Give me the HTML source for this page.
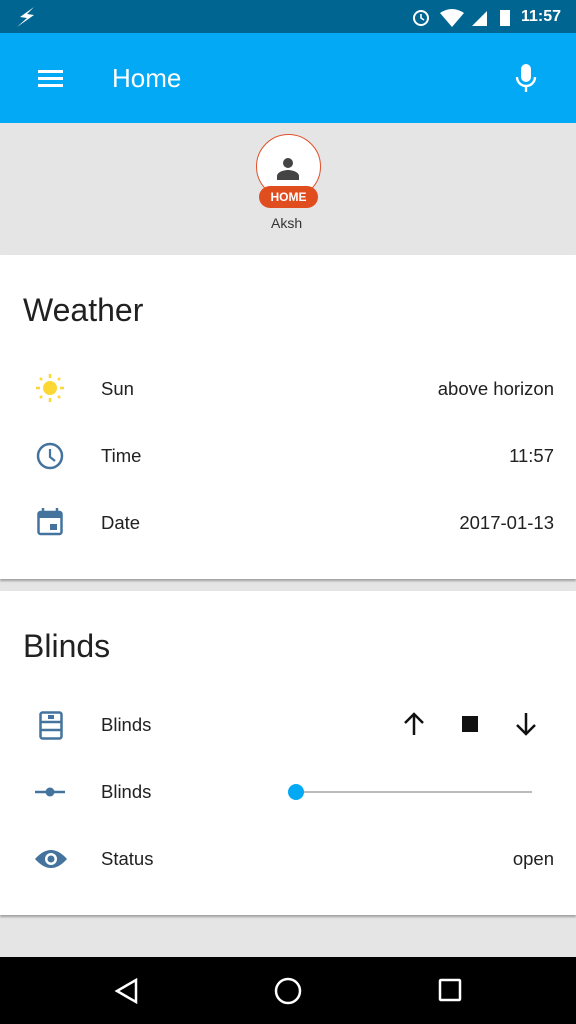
<!DOCTYPE html>
<html><head><style>
*{margin:0;padding:0;box-sizing:border-box}
body{width:576px;height:1024px;background:#e5e5e5;font-family:"Liberation Sans",sans-serif;position:relative;overflow:hidden;color:#212121}
.abs{position:absolute}
.card{position:absolute;left:0;width:576px;background:#fff;box-shadow:0 2px 2px rgba(0,0,0,.3)}
.t{position:absolute;font-size:18.5px}
.h{position:absolute;left:23px;font-size:32px}
svg.i{position:absolute}
</style></head><body>
<div class="abs" style="top:0;left:0;width:576px;height:33px;background:#006591"></div>
<svg class="abs" style="left:14px;top:6px" width="24" height="22"><path d="M20 1L6 11l7 1L3 21l17-12-7-1z" fill="#fff"/></svg>
<svg class="abs" style="left:410px;top:6px" width="120" height="22">
<circle cx="11" cy="12" r="7" fill="none" stroke="#fff" stroke-width="2"/><path d="M11 8v4l3 2" stroke="#fff" stroke-width="1.6" fill="none"/>
<path d="M30 7q12-8 24 0l-12 14z" fill="#fff"/><path d="M62 20l15-15v15z" fill="#fff"/>
<rect x="90" y="4" width="10" height="16" fill="#fff"/></svg>
<div class="abs" style="top:8px;left:521px;color:#fff;font-size:16px;font-weight:bold">11:57</div>
<div class="abs" style="top:33px;left:0;width:576px;height:90px;background:#03a9f4"></div>
<div class="abs" style="left:38px;top:70px;width:25px;height:3px;background:#fff;box-shadow:0 7px #fff,0 14px #fff"></div>
<div class="abs" style="left:112px;top:63px;color:#fff;font-size:26px">Home</div>
<svg class="abs" style="left:515px;top:64px" width="22" height="28"><rect x="6" y="0" width="10" height="18" rx="5" fill="#fff"/><path d="M2 13a9 9 0 0 0 18 0M11 22v6" stroke="#fff" stroke-width="2.4" fill="none"/></svg>
<div class="abs" style="left:256px;top:134px;width:65px;height:65px;border-radius:50%;background:#fff;border:1.5px solid #e0502a"></div>
<svg class="abs" style="left:276px;top:156px" width="24" height="24"><circle cx="12" cy="7" r="5" fill="#444"/><path d="M1 24v-4c0-4 7-6 11-6s11 2 11 6v4z" fill="#444"/></svg>
<div class="abs" style="left:259px;top:186px;width:59px;height:22px;border-radius:11px;background:#e04e1f;color:#fff;font-size:12px;font-weight:bold;text-align:center;line-height:22px">HOME</div>
<div class="abs" style="left:271px;top:215px;font-size:14px;color:#333">Aksh</div>

<div class="card" style="top:255px;height:324px">
<div class="h" style="top:37px">Weather</div>
<svg class="i" style="left:34px;top:117px" width="32" height="32"><circle cx="16" cy="16" r="7" fill="#fdd835"/><g stroke="#fdd835" stroke-width="2.5"><path d="M16 2v4M16 26v4M2 16h4M26 16h4M6 6l2 2M24 24l2 2M6 26l2-2M24 8l2-2"/></g></svg>
<div class="t" style="left:101px;top:123px">Sun</div><div class="t" style="right:22px;top:123px">above horizon</div>
<svg class="i" style="left:36px;top:187px" width="28" height="28"><circle cx="14" cy="14" r="12" fill="none" stroke="#44739e" stroke-width="2.5"/><path d="M14 7v8l5 4" stroke="#44739e" stroke-width="2.2" fill="none"/></svg>
<div class="t" style="left:101px;top:190px">Time</div><div class="t" style="right:22px;top:190px">11:57</div>
<svg class="i" style="left:37px;top:253px" width="26" height="28"><rect x="1.5" y="4" width="23" height="22" rx="2" fill="none" stroke="#44739e" stroke-width="2.5"/><rect x="1.5" y="4" width="23" height="6" fill="#44739e"/><path d="M6 0v6M20 0v6" stroke="#44739e" stroke-width="2.5"/><rect x="13" y="16" width="7" height="6" fill="#44739e"/></svg>
<div class="t" style="left:101px;top:257px">Date</div><div class="t" style="right:22px;top:257px">2017-01-13</div>
</div>

<div class="card" style="top:591px;height:324px">
<div class="h" style="top:37px">Blinds</div>
<svg class="i" style="left:39px;top:120px" width="24" height="30"><rect x="1.5" y="1.5" width="21" height="26" rx="2" fill="none" stroke="#44739e" stroke-width="2.5"/><path d="M2 11h20M2 19h20" stroke="#44739e" stroke-width="2.5"/><rect x="9" y="4" width="6" height="4" fill="#44739e"/></svg>
<div class="t" style="left:101px;top:123px">Blinds</div>
<svg class="i" style="left:402px;top:120px" width="140" height="26"><path d="M12 24V3M3 12l9-9 9 9" stroke="#111" stroke-width="2.5" fill="none"/><rect x="60" y="5" width="16" height="16" fill="#111"/><path d="M124 2v21M115 14l9 9 9-9" stroke="#111" stroke-width="2.5" fill="none"/></svg>
<svg class="i" style="left:35px;top:194px" width="32" height="14"><path d="M0 7h30" stroke="#44739e" stroke-width="2.5"/><circle cx="15" cy="7" r="4.5" fill="#44739e"/></svg>
<div class="t" style="left:101px;top:190px">Blinds</div>
<div class="abs" style="left:296px;top:200px;width:236px;height:2px;background:#bbb"></div>
<div class="abs" style="left:288px;top:193px;width:16px;height:16px;border-radius:50%;background:#03a9f4"></div>
<svg class="i" style="left:34px;top:256px" width="34" height="24"><path d="M1 12Q17-6 33 12Q17 30 1 12z" fill="#44739e"/><circle cx="17" cy="12" r="6" fill="#fff"/><circle cx="17" cy="12" r="3.5" fill="#44739e"/></svg>
<div class="t" style="left:101px;top:257px">Status</div><div class="t" style="right:22px;top:257px">open</div>
</div>

<div class="abs" style="top:957px;left:0;width:576px;height:67px;background:#000"></div>
<svg class="abs" style="left:110px;top:975px" width="360" height="32"><path d="M26 5L7 16l19 11z" fill="none" stroke="#fff" stroke-width="2.5"/><circle cx="178" cy="16" r="12" fill="none" stroke="#fff" stroke-width="2.5"/><rect x="330" y="5" width="20" height="20" rx="1" fill="none" stroke="#fff" stroke-width="2.5"/></svg>
</body></html>
